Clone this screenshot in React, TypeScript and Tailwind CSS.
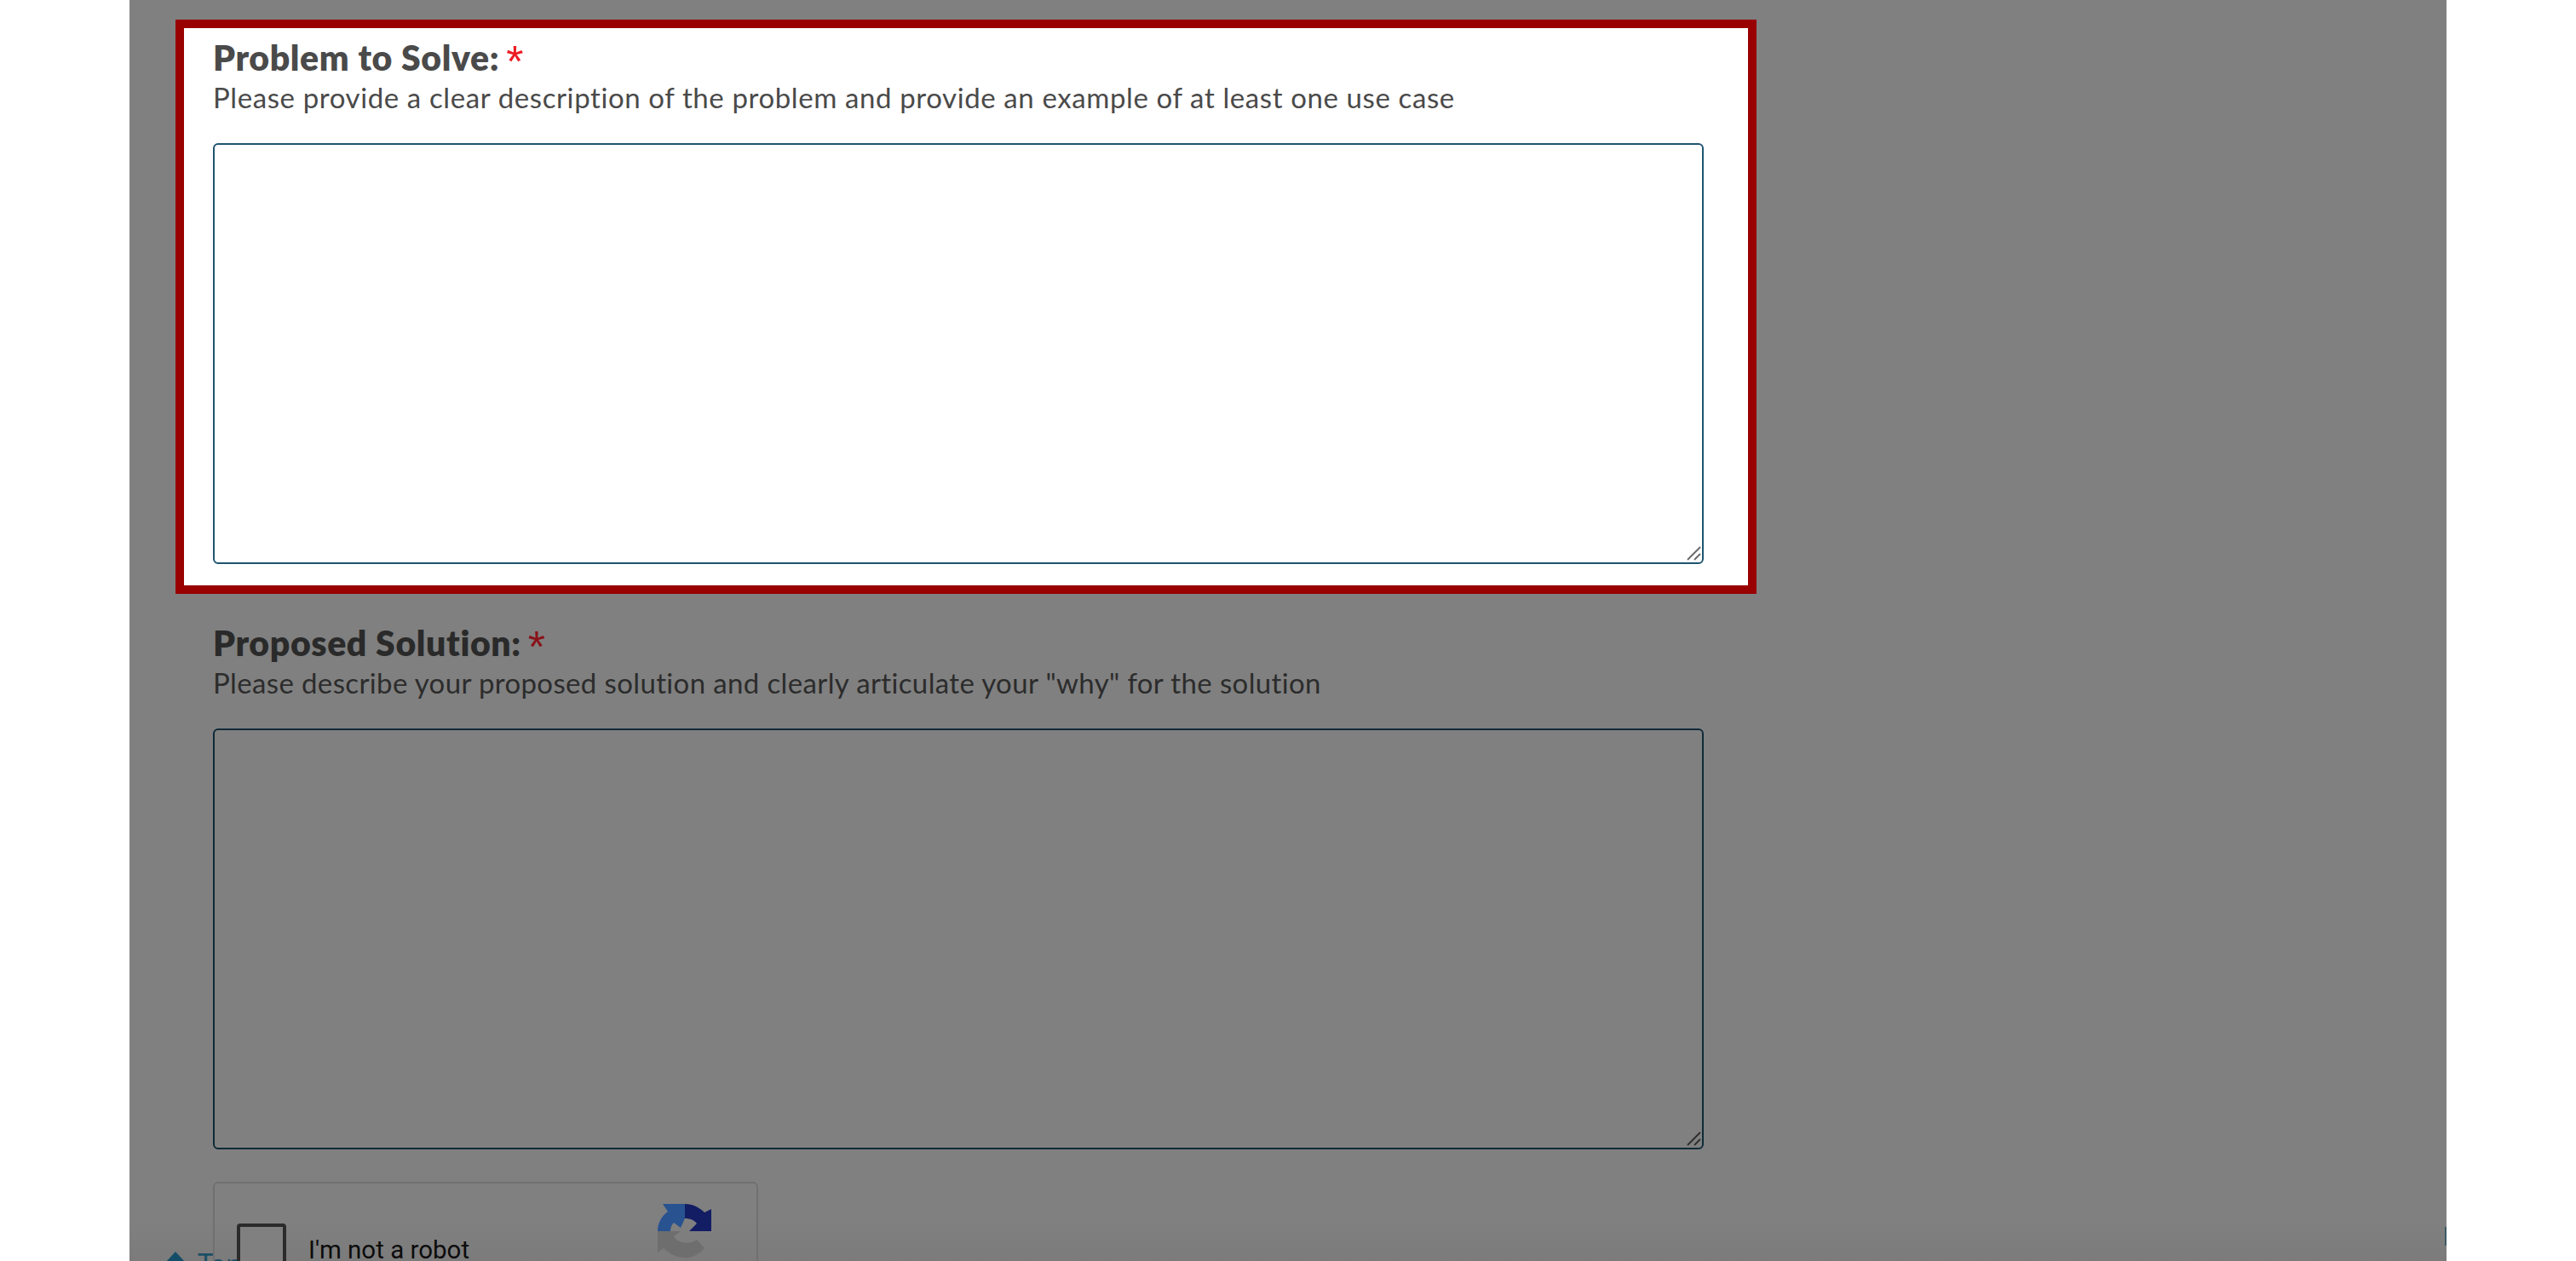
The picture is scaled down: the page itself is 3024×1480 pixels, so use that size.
// App.tsx
const fontStack = "font-['Lato','Liberation_Sans',sans-serif]";

const RecaptchaLogo = () => (
  <svg className="w-[64px] h-[64px]" viewBox="0 0 64 64">
    <path d="M32 0H6L12 9C4 15 0 23 0 32H15C15 28 16 25 19 22L27 28L32 17Z" fill="#285290" />
    <path d="M32 0C41 0 49 4 55 10L63 6V32H37L46 23C43 19 38 17 32 17Z" fill="#121d63" />
    <path d="M0 32H27L19 38C24 47 38 48 46 42L55 52C49 59 40 64 30 63C21 62 13 58 7 52L0 57Z" fill="#6e6e6e" />
  </svg>
);

// resize grip of the textarea, drawn because the native one is half the size
const ResizeGrip = ({ dimmed }: { dimmed?: boolean }) => (
  <svg
    className={`absolute right-[3px] bottom-[4px] w-[17px] h-[17px] pointer-events-none ${
      dimmed ? "text-[#2f2f2f]" : "text-[#6a6a6a]"
    }`}
    viewBox="0 0 17 17"
    fill="none"
    stroke="currentColor"
    strokeWidth="2"
  >
    <path d="M1 16L16 1" />
    <path d="M9 16L16 9" />
  </svg>
);

const FormField = ({
  label,
  hint,
  dimmed,
}: {
  label: string;
  hint: string;
  dimmed?: boolean;
}) => (
  <div>
    <div className="h-[48px] flex items-end">
      <label
        className={`text-[41px] leading-[48px] font-extrabold tracking-[0.6px] ${
          dimmed ? "text-[#2a2a2a]" : "text-[#4a4a4a]"
        }`}
      >
        {label}
        <span
          className={`ml-[8px] font-normal text-[52px] leading-[0] align-[-7px] font-['Liberation_Sans',sans-serif] ${
            dimmed ? "text-[#8a1218]" : "text-[#ed1c24]"
          }`}
        >
          *
        </span>
      </label>
    </div>
    <p
      className={`text-[33px] leading-[44px] ${
        dimmed
          ? "text-[#2c2c2c] tracking-[0.36px]"
          : "text-[#4a4a4a] tracking-[0.6px]"
      }`}
    >
      {hint}
    </p>
    <div className="relative mt-[32px] w-[1750px] h-[494px]">
      <textarea
        className={`block w-full h-full resize-none rounded-[6px] border-2 outline-none ${
          dimmed
            ? "bg-[#808080] border-[#0f2a38]"
            : "bg-white border-[#1f5570]"
        }`}
      />
      <ResizeGrip dimmed={dimmed} />
    </div>
  </div>
);

export default function App() {
  return (
    <div className={`h-[1480px] overflow-hidden bg-white pl-[152px] ${fontStack}`}>
      <div className="relative w-[2720px] h-[1480px] overflow-hidden bg-[#808080] pt-[23px] pl-[54px]">
        {/* Highlighted question */}
        <div className="w-[1856px] h-[674px] border-[10px] border-[#990000] bg-white pl-[34px] pt-[11px]">
          <FormField
            label="Problem to Solve:"
            hint="Please provide a clear description of the problem and provide an example of at least one use case"
          />
        </div>

        <div className="pl-[44px] pt-[34px]">
          <FormField
            dimmed
            label="Proposed Solution:"
            hint={`Please describe your proposed solution and clearly articulate your "why" for the solution`}
          />

          {/* reCAPTCHA, sits above the floating Top link */}
          <div className="relative z-10 mt-[38px] w-[640px] h-[158px] rounded-[6px] border-2 border-[#707070] flex items-start">
            <div className="mt-[47px] ml-[26px] w-[58px] h-[58px] rounded-[4px] border-[4px] border-[#2b2b2b] bg-[#808080] shrink-0" />
            <span className="ml-[26px] mt-[60px] text-[29.5px] leading-[36px] text-[#0c0c0c] font-['Roboto',sans-serif]">
              I'm not a robot
            </span>
            <div className="ml-[221px] mt-[24px]">
              <RecaptchaLogo />
            </div>
          </div>
        </div>

        {/* Floating back to top link */}
        <a className="absolute left-[42px] top-[1463px] flex items-center gap-[14px] text-[#1d5269] text-[32px] leading-[40px]">
          <span className="w-0 h-0 border-x-[12px] border-x-transparent border-b-[13px] border-b-[#14506b] mb-[15px]" />
          Top
        </a>

        {/* Shadow of the sticky bar at the bottom edge */}
        <div className="absolute left-0 right-0 bottom-0 h-[50px] bg-gradient-to-b from-transparent to-[#0000000a]" />
        <div className="absolute right-0 top-[1440px] w-[2px] h-[22px] bg-[#3d5a68]" />
      </div>
    </div>
  );
}
